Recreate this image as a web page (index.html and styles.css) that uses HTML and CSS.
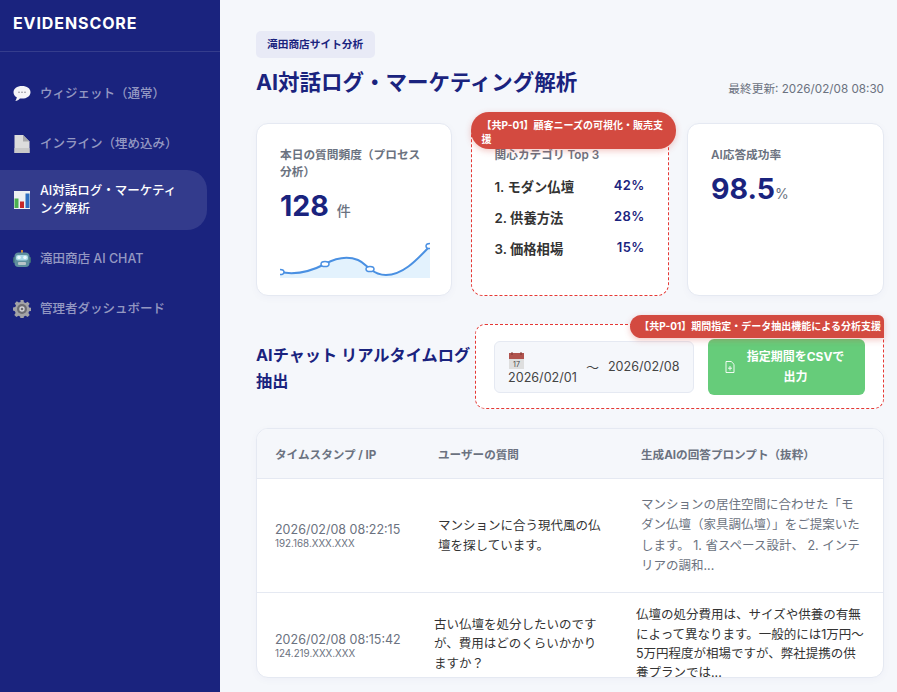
FILE: index.html
```html
<!DOCTYPE html>
<html lang="ja">
<head>
<meta charset="utf-8">
<title>EVIDENSCORE</title>
<link rel="stylesheet" href="styles.css">
</head>
<body>
<div class="app">
  <aside class="sidebar">
    <div class="brand">EVIDENSCORE</div>
    <nav class="nav">
      <a class="nav-item">
        <svg class="nav-icon" viewBox="0 0 18 18"><path d="M9 1C4 1 .5 3.600.5 7.200c0 2.200 1.300 4 3.300 5.100-.2 1.500-.8 2.800-1.500 3.700 1.800-.3 3.500-1.300 4.600-2.600.7.100 1.400.200 2.100.200 5 0 8.500-2.700 8.500-6.400S14 1 9 1z" fill="#f4f4f6"/><circle cx="6" cy="7.300" r=".8" fill="#8a8a90"/><circle cx="9" cy="7.300" r=".8" fill="#8a8a90"/><circle cx="12" cy="7.300" r=".8" fill="#8a8a90"/></svg>
        <span>ウィジェット（通常）</span>
      </a>
      <a class="nav-item">
        <svg class="nav-icon" viewBox="0 0 18 18"><path d="M1.500 0H10l6.500 6.500V18h-15z" fill="#dcdcdc"/><path d="M10 0l6.500 6.500H10z" fill="#a9a9ab"/><path d="M1.500 13h15v5h-15z" fill="#c9c9c9"/></svg>
        <span>インライン（埋め込み）</span>
      </a>
      <a class="nav-item active">
        <svg class="nav-icon" viewBox="0 0 18 18"><path d="M1 0h16v18H1z" fill="#eef0f2"/><path d="M1.500 7.500h4V17h-4z" fill="#4caf50"/><path d="M7 10.500h4V17H7z" fill="#c62828"/><path d="M12.500 2.500h4V17h-4z" fill="#2f6fc0"/></svg>
        <span>AI対話ログ・マーケティング解析</span>
      </a>
      <a class="nav-item">
        <svg class="nav-icon" viewBox="0 0 18 18"><path d="M8 0h2v3H8z" fill="#c98a3a"/><rect x="0" y="7" width="2.500" height="6" rx="1" fill="#3a6a78"/><rect x="15.500" y="7" width="2.500" height="6" rx="1" fill="#3a6a78"/><rect x="1.500" y="2.500" width="15" height="14.500" rx="4" fill="#5f8f9e"/><rect x="3" y="5" width="12" height="5.500" rx="2" fill="#a8d8e6"/><circle cx="6" cy="7.500" r="1.800" fill="#e8f7fb"/><circle cx="12" cy="7.500" r="1.800" fill="#e8f7fb"/><rect x="5" y="12" width="8" height="3" rx="1" fill="#b9c5c9"/></svg>
        <span>滝田商店 AI CHAT</span>
      </a>
      <a class="nav-item">
        <svg class="nav-icon" viewBox="0 0 18 18"><path d="M7.500 0h3l.4 2.300 1.700.7 2-1.300 2.100 2.100-1.300 2 .7 1.700 2.300.4v3l-2.300.4-.7 1.700 1.300 2-2.100 2.100-2-1.300-1.700.7-.4 2.300h-3l-.4-2.300-1.700-.7-2 1.300-2.100-2.100 1.300-2-.7-1.700L0 10.500v-3l2.300-.4.7-1.700-1.300-2 2.100-2.100 2 1.300 1.700-.7z" fill="#a3a3a6"/><circle cx="9" cy="9" r="5" fill="#6d6d72"/><circle cx="9" cy="9" r="2.700" fill="#d5d5d8"/><circle cx="9" cy="9" r="1.300" fill="#6d6d72"/></svg>
        <span>管理者ダッシュボード</span>
      </a>
    </nav>
  </aside>
  <main class="main">
    <span class="tag">滝田商店サイト分析</span>
    <header class="page-head">
      <h1 class="page-title">AI対話ログ・マーケティング解析</h1>
      <span class="updated">最終更新: 2026/02/08 08:30</span>
    </header>
    <section class="cards">
      <article class="card">
        <div class="card-label">本日の質問頻度（プロセス分析）</div>
        <div class="metric">128<span class="unit unit-count">件</span></div>
        <svg class="spark" viewBox="0 0 150 36" preserveAspectRatio="none">
          <path d="M0 30C15 33 30 30 45 22C56 16 68 14 78 18C84 20.500 87 25 90 27C95 31 100 33 106 33C122 33 135 20 150 4V36H0z" fill="#e3f2fd"/>
          <path d="M0 30C15 33 30 30 45 22C56 16 68 14 78 18C84 20.500 87 25 90 27C95 31 100 33 106 33C122 33 135 20 150 4" fill="none" stroke="#4a90e2" stroke-width="2"/>
          <ellipse cx="0" cy="30" rx="4" ry="2.600" fill="#fff" stroke="#4a90e2" stroke-width="1.500"/>
          <ellipse cx="45" cy="22" rx="4" ry="2.600" fill="#fff" stroke="#4a90e2" stroke-width="1.500"/>
          <ellipse cx="90" cy="27" rx="4" ry="2.600" fill="#fff" stroke="#4a90e2" stroke-width="1.500"/>
          <ellipse cx="150" cy="4" rx="4" ry="2.600" fill="#fff" stroke="#4a90e2" stroke-width="1.500"/>
        </svg>
      </article>
      <article class="card card-marked">
        <div class="badge badge-top">【共P-01】顧客ニーズの可視化・販売支援</div>
        <div class="card-label">関心カテゴリ Top 3</div>
        <ul class="rank">
          <li class="rank-row"><span class="rank-name">1. モダン仏壇</span><span class="rank-value">42%</span></li>
          <li class="rank-row"><span class="rank-name">2. 供養方法</span><span class="rank-value">28%</span></li>
          <li class="rank-row"><span class="rank-name">3. 価格相場</span><span class="rank-value">15%</span></li>
        </ul>
      </article>
      <article class="card">
        <div class="card-label">AI応答成功率</div>
        <div class="metric">98.5<span class="unit unit-pct">%</span></div>
      </article>
    </section>
    <section class="export-row">
      <h2 class="export-title">AIチャット リアルタイムログ抽出</h2>
      <div class="export-panel">
        <div class="badge badge-side">【共P-01】期間指定・データ抽出機能による分析支援</div>
        <div class="dates">
          <span class="date-from">
            <svg class="cal" viewBox="0 0 17 17"><path d="M1 2h15v15H1z" fill="#dedede"/><path d="M1 1h15v6H1z" fill="#b0534e"/><path d="M3.500 0h1v3h-1zM12.500 0h1v3h-1z" fill="#7d3431"/><text x="8.500" y="15.300" class="cal-num" text-anchor="middle">17</text></svg>
            <span class="date-text">2026/02/01</span>
          </span>
          <span class="date-sep">～</span>
          <span class="date-text">2026/02/08</span>
        </div>
        <button class="csv-btn" type="button">
          <svg class="csv-icon" viewBox="0 0 10 12"><path d="M1 .5h5.200L9 3.300v8.200H1z" fill="none" stroke="#fff" stroke-width=".9"/><path d="M5 5v4.400M3 7.200h4" stroke="#fff" stroke-width=".9"/></svg>
          <span>指定期間をCSVで出力</span>
        </button>
      </div>
    </section>
    <section class="log">
      <div class="log-row log-head">
        <div>タイムスタンプ / IP</div>
        <div>ユーザーの質問</div>
        <div>生成AIの回答プロンプト（抜粋）</div>
      </div>
      <div class="log-row log-first">
        <div class="stamp">2026/02/08 08:22:15<small class="ip">192.168.XXX.XXX</small></div>
        <div class="question">マンションに合う現代風の仏壇を探しています。</div>
        <div class="answer answer-muted">マンションの居住空間に合わせた「モダン仏壇（家具調仏壇）」をご提案いたします。 1. 省スペース設計、 2. インテリアの調和...</div>
      </div>
      <div class="log-row log-second">
        <div class="stamp">2026/02/08 08:15:42<small class="ip">124.219.XXX.XXX</small></div>
        <div class="question">古い仏壇を処分したいのですが、費用はどのくらいかかりますか？</div>
        <div class="answer">仏壇の処分費用は、サイズや供養の有無によって異なります。一般的には1万円～5万円程度が相場ですが、弊社提携の供養プランでは...</div>
      </div>
    </section>
  </main>
</div>
</body>
</html>
```
FILE: styles.css
```css
* { box-sizing: border-box; }
html, body { margin: 0; height: 100%; overflow: hidden; }
body {
  font-family: Inter, "Noto Sans CJK JP", sans-serif;
  color: #333;
  background: #f5f7fb;
}
.app { display: flex; width: 897px; height: 692px; }

.sidebar { flex: 0 0 220px; background: #1a237e; color: #fff; }
.brand {
  height: 52px;
  padding: 14px 13px 0;
  font-size: 16px;
  line-height: 19px;
  font-weight: 700;
  letter-spacing: .9px;
  border-bottom: 1px solid rgba(255,255,255,.12);
}
.nav { display: flex; flex-direction: column; gap: 8px; padding: 21px 13px 0 0; }
.nav-item {
  display: flex;
  align-items: center;
  gap: 9px;
  padding: 12px 20px 12px 13px;
  font-size: 12.500px;
  font-weight: 500;
  line-height: 18px;
  color: rgba(255,255,255,.55);
  border-radius: 0 20px 20px 0;
}
.nav-item.active { margin-top: -3px; color: #fff; background: rgba(255,255,255,.11); }
.nav-icon { flex: 0 0 18px; width: 18px; height: 18px; }

.main { flex: 1; min-width: 0; padding: 31px 13px 0 36px; }
.tag {
  display: inline-block;
  padding: 6px 12px 6px 11px;
  font-size: 10.700px;
  line-height: 15px;
  font-weight: 700;
  color: #1a237e;
  background: #e8eaf6;
  border-radius: 5px;
}
.page-head {
  display: flex;
  justify-content: space-between;
  align-items: flex-end;
  margin-top: 9px;
}
.page-title {
  margin: 0;
  font-size: 21.500px;
  line-height: 30px;
  font-weight: 700;
  color: #1a237e;
}
.updated { font-size: 11.700px; line-height: 16px; color: #6b7280; }

.cards {
  display: grid;
  grid-template-columns: 196px 198px 197px;
  grid-template-rows: 173px;
  column-gap: 18.500px;
  margin-top: 26px;
}
.card {
  position: relative;
  padding: 23px 23px 0;
  background: #fff;
  border: 1px solid #e5e9f2;
  border-radius: 12px;
  box-shadow: 0 2px 8px rgba(26,35,126,.03);
}
.card-marked { border: 1px dashed #e53935; box-shadow: none; }
.card-label { font-size: 11.700px; line-height: 17px; font-weight: 600; color: #6b7280; }
.metric {
  margin-top: 5.500px;
  font-size: 28.500px;
  line-height: 38px;
  font-weight: 700;
  color: #1a237e;
}
.unit { font-weight: 500; color: #6b7280; }
.unit-count { margin-left: 8px; font-size: 14px; }
.unit-pct { font-size: 14px; font-weight: 400; }
.spark { display: block; width: 150px; height: 36px; margin-top: 12.500px; }

.badge {
  position: absolute;
  font-size: 10px;
  font-weight: 700;
  color: #fff;
  background: #d34a40;
  box-shadow: 0 2px 6px rgba(211,74,64,.3);
}
.badge-top {
  left: -1px;
  top: -12px;
  width: 205px;
  padding: 6px 12px 3px 11px;
  line-height: 14px;
  border-radius: 18px;
}
.badge-side {
  right: -1px;
  top: -10px;
  padding: 4px 3px 4px 9px;
  line-height: 15px;
  white-space: nowrap;
  border-radius: 12px 6px 0 12px;
}
.rank { list-style: none; margin: 13px 0 0; padding: 0; }
.rank-row {
  display: flex;
  justify-content: space-between;
  align-items: flex-start;
  height: 31px;
  font-size: 13.300px;
  line-height: 20px;
  font-weight: 600;
}
.rank-value { margin-top: -2px; color: #1a237e; font-size: 13px; letter-spacing: .3px; }

.export-row {
  display: flex;
  align-items: center;
  height: 85px;
  margin-top: 28px;
}
.export-title {
  flex: 0 0 219px;
  margin: 0;
  padding-top: 2px;
  font-size: 16.200px;
  line-height: 26px;
  font-weight: 700;
  color: #1a237e;
}
.export-panel {
  position: relative;
  flex: 0 0 409px;
  height: 85px;
  display: flex;
  align-items: center;
  gap: 14px;
  padding: 0 18px;
  background: #fff;
  border: 1px dashed #e53935;
  border-radius: 10px;
}
.dates {
  flex: 0 0 200px;
  height: 52px;
  display: flex;
  align-items: center;
  gap: 9px;
  padding: 0 13px;
  font-size: 12.600px;
  color: #444;
  background: #f5f7fb;
  border: 1px solid #e5e9f2;
  border-radius: 6px;
}
.date-from { display: flex; flex-direction: column; gap: 1px; padding-top: 4px; }
.cal { display: block; width: 17px; height: 17px; }
.cal-num { font-family: Inter, sans-serif; font-size: 7px; fill: #444; }
.date-text { line-height: 16px; white-space: nowrap; }
.date-sep { font-size: 13px; }
.csv-btn {
  flex: 0 0 157px;
  height: 56px;
  display: flex;
  align-items: center;
  justify-content: center;
  gap: 8px;
  padding: 0 17px;
  font: inherit;
  font-size: 12px;
  line-height: 20px;
  font-weight: 700;
  color: #fff;
  background: #66cc7a;
  border: 0;
  border-radius: 6px;
}
.csv-icon { flex: 0 0 10px; width: 10px; height: 12px; }

.log {
  height: 250px;
  margin-top: 19px;
  overflow: hidden;
  background: #fff;
  border: 1px solid #e5e9f2;
  border-radius: 12px;
  box-shadow: 0 2px 8px rgba(26,35,126,.03);
}
.log-row { display: grid; align-items: center; border-bottom: 1px solid #e5e9f2; }
.log-head {
  grid-template-columns: 163px 203px 1fr;
  height: 50px;
  padding-left: 18px;
  font-size: 11.600px;
  font-weight: 700;
  color: #6b7280;
  background: #f5f7fb;
}
.log-first {
  grid-template-columns: 163px 203px 1fr;
  height: 114px;
  padding: 0 18px;
}
.log-second {
  grid-template-columns: 159px 202px 1fr;
  height: 102px;
  padding: 0 16px 0 18px;
  border-bottom: 0;
}
.stamp { font-size: 12.500px; line-height: 15px; color: #6b7280; padding-top: 1px; }
.log-second .stamp { padding-top: 3px; }
.ip { display: block; font-size: 9.800px; line-height: 13px; }
.question { font-size: 12.500px; line-height: 19.300px; padding-right: 33px; }
.answer { font-size: 12.500px; line-height: 19.300px; }
.answer-muted { line-height: 20.300px; color: #6b7280; }
```
